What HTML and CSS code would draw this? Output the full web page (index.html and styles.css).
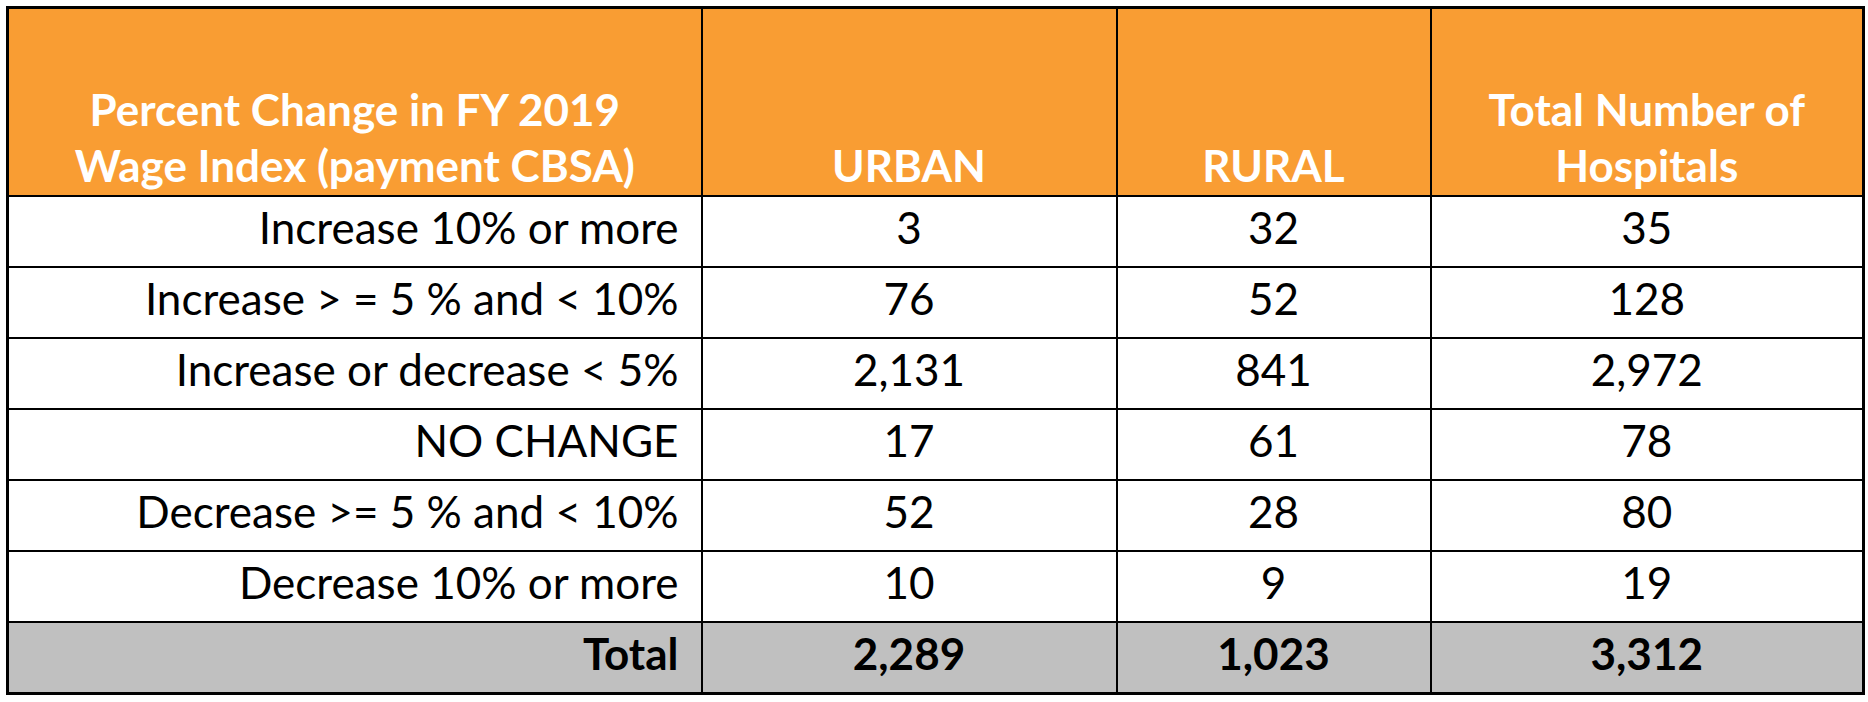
FILE: index.html
```html
<!DOCTYPE html>
<html>
<head>
<meta charset="utf-8">
<link rel="stylesheet" href="styles.css">
</head>
<body>
<table class="wage">
  <colgroup>
    <col class="c-label">
    <col class="c-urban">
    <col class="c-rural">
    <col class="c-total">
  </colgroup>
  <thead>
    <tr class="head-row">
      <th class="label-head">Percent Change in FY 2019<br>Wage Index (payment CBSA)</th>
      <th>URBAN</th>
      <th>RURAL</th>
      <th>Total Number of<br>Hospitals</th>
    </tr>
  </thead>
  <tbody>
    <tr><td class="label">Increase 10% or more</td><td>3</td><td>32</td><td>35</td></tr>
    <tr><td class="label">Increase &gt; = 5 % and &lt; 10%</td><td>76</td><td>52</td><td>128</td></tr>
    <tr><td class="label">Increase or decrease &lt; 5%</td><td>2,131</td><td>841</td><td>2,972</td></tr>
    <tr><td class="label">NO CHANGE</td><td>17</td><td>61</td><td>78</td></tr>
    <tr><td class="label">Decrease &gt;= 5 % and &lt; 10%</td><td>52</td><td>28</td><td>80</td></tr>
    <tr><td class="label">Decrease 10% or more</td><td>10</td><td>9</td><td>19</td></tr>
    <tr class="total-row"><td class="label">Total</td><td>2,289</td><td>1,023</td><td>3,312</td></tr>
  </tbody>
</table>
</body>
</html>
```
FILE: styles.css
```css
html, body {
  margin: 0;
  background: #ffffff;
}

body {
  padding: 6px 0 0 6px;
  font-family: Lato, "Open Sans", "Liberation Sans", sans-serif;
}

.wage {
  border-collapse: collapse;
  table-layout: fixed;
  width: 1856px;
  border: 3px solid #000;
}

.c-label { width: 694px; }
.c-urban { width: 415px; }
.c-rural { width: 314px; }
.c-total { width: 433px; }

.wage th,
.wage td {
  border: 2px solid #000;
  padding: 0;
  text-align: center;
  vertical-align: middle;
  font-size: 44px;
  color: #000;
}

.head-row th {
  height: 188px;
  background: #f99d33;
  color: #ffffff;
  font-weight: 700;
  vertical-align: bottom;
  line-height: 56px;
  padding-bottom: 2px;
  box-sizing: border-box;
}

.head-row th.label-head {
  border-bottom: 2px dashed #9a8f86;
}

.wage tbody td {
  height: 60px;
  line-height: 60px;
  padding-bottom: 9px;
  font-weight: 400;
}

.wage td.label {
  text-align: right;
  padding-right: 22px;
}

.wage .total-row td {
  background: #c0c0c0;
  font-weight: 700;
}
```
